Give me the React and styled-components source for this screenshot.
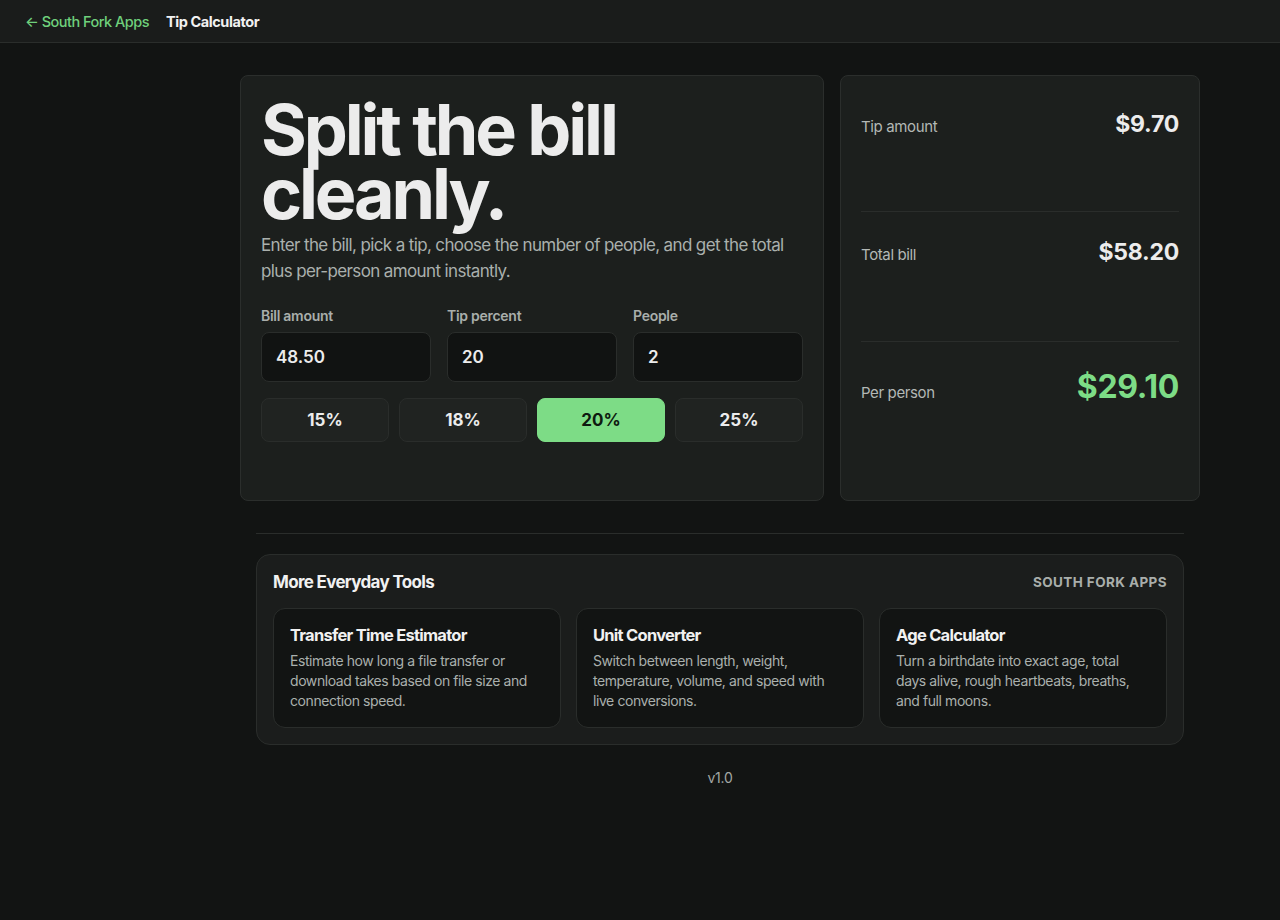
import React from "react";
import styled, { createGlobalStyle } from "styled-components";

const Global = createGlobalStyle`
  * { box-sizing: border-box; }
  html, body { margin: 0; padding: 0; background: #121413; }
  body {
    font-family: Inter, "Noto Sans", "Liberation Sans", sans-serif;
    color: #ececec;
    -webkit-font-smoothing: antialiased;
  }
`;

const Page = styled.div`
  min-height: 920px;
  background: #121413;
`;

const TopBar = styled.header`
  height: 43px;
  display: flex;
  align-items: center;
  gap: 17px;
  padding: 0 25px;
  background: #1a1c1b;
  border-bottom: 1px solid #2a2d2b;
`;

const BackLink = styled.a`
  color: #6fd07c;
  font-size: 14.5px;
  font-weight: 500;
  letter-spacing: -0.035em;
  text-decoration: none;
`;

const AppTitle = styled.span`
  color: #f1f1f1;
  font-size: 14.5px;
  font-weight: 700;
  letter-spacing: -0.03em;
`;

const Shell = styled.div`
  display: grid;
  grid-template-columns: 160px 1fr;
`;

const Main = styled.main`
  width: 960px;
  margin: 0 auto;
  padding-top: 32px;
`;

const TopGrid = styled.section`
  display: grid;
  grid-template-columns: 584px 360px;
  gap: 16px;
`;

const Card = styled.div`
  min-height: 426px;
  background: #1c1f1d;
  border: 1px solid #2b2e2c;
  border-radius: 8px;
  padding: 20px;
`;

const Heading = styled.h1`
  margin: 0;
  font-size: 70px;
  line-height: 64px;
  font-weight: 700;
  letter-spacing: -0.045em;
  color: #ececec;
  padding-top: 2px;
`;

const Lead = styled.p`
  margin: 6px 0 0;
  font-size: 17px;
  line-height: 26px;
  color: #aab0ad;
  letter-spacing: -0.037em;
`;

const FieldRow = styled.div`
  display: grid;
  grid-template-columns: repeat(3, 1fr);
  gap: 16px;
  margin-top: 24px;
`;

const Field = styled.label`
  display: flex;
  flex-direction: column;
  gap: 8px;
`;

const FieldLabel = styled.span`
  font-size: 14px;
  font-weight: 600;
  color: #a9aeab;
  letter-spacing: -0.02em;
  line-height: 16px;
`;

const Input = styled.input`
  height: 50px;
  width: 100%;
  background: #111312;
  border: 1px solid #2a2d2b;
  border-radius: 8px;
  padding: 0 14px;
  color: #ececec;
  font-family: inherit;
  font-size: 17px;
  font-weight: 600;
  outline: none;
`;

const Presets = styled.div`
  display: grid;
  grid-template-columns: repeat(4, 1fr);
  gap: 10px;
  margin-top: 16px;
`;

const Preset = styled.button`
  height: 44px;
  border-radius: 8px;
  border: 1px solid ${(p) => (p.$active ? "#7ddc86" : "#2a2d2b")};
  background: ${(p) => (p.$active ? "#7ddc86" : "#202321")};
  color: ${(p) => (p.$active ? "#0e1a10" : "#ececec")};
  font-family: inherit;
  font-size: 17px;
  font-weight: 700;
  cursor: pointer;
`;

const ResultCard = styled(Card)`
  display: grid;
  grid-template-rows: 116px 130px 1fr;
`;

const ResultRow = styled.div`
  display: flex;
  justify-content: space-between;
  align-items: baseline;
  padding-top: ${(p) => p.$pt}px;
  border-bottom: ${(p) => (p.$last ? "none" : "1px solid #2a2d2b")};
`;

const ResultLabel = styled.span`
  font-size: 15px;
  color: #b3b8b5;
  letter-spacing: -0.025em;
`;

const ResultValue = styled.span`
  font-size: ${(p) => (p.$big ? 32 : 23)}px;
  line-height: 1.2;
  font-weight: 700;
  color: ${(p) => (p.$big ? "#7ddc86" : "#ececec")};
  letter-spacing: -0.01em;
`;

const Divider = styled.hr`
  margin: 32px 16px 0;
  border: 0;
  border-top: 1px solid #2a2d2b;
`;

const ToolsPanel = styled.section`
  margin: 20px 16px 0;
  background: #1b1d1c;
  border: 1px solid #2a2d2b;
  border-radius: 14px;
  padding: 16px;
`;

const ToolsHeader = styled.div`
  display: flex;
  justify-content: space-between;
  align-items: center;
  height: 22px;
`;

const ToolsTitle = styled.h2`
  margin: 0;
  font-size: 17px;
  font-weight: 700;
  letter-spacing: -0.04em;
  color: #f1f1f1;
`;

const Brand = styled.span`
  font-size: 13.5px;
  font-weight: 700;
  letter-spacing: 0.03em;
  color: #a9aeab;
`;

const ToolGrid = styled.div`
  display: grid;
  grid-template-columns: repeat(3, 1fr);
  gap: 15px;
  margin-top: 15px;
`;

const ToolCard = styled.a`
  display: block;
  height: 120px;
  background: #121413;
  border: 1px solid #2a2d2b;
  border-radius: 12px;
  padding: 16px 16px;
  text-decoration: none;
`;

const ToolName = styled.h3`
  margin: 0;
  font-size: 16.5px;
  line-height: 20px;
  font-weight: 700;
  letter-spacing: -0.045em;
  color: #f1f1f1;
`;

const ToolDesc = styled.p`
  margin: 6px 0 0;
  font-size: 14px;
  line-height: 20px;
  color: #aab0ad;
  letter-spacing: -0.03em;
`;

const Version = styled.footer`
  text-align: center;
  margin-top: 24px;
  font-size: 14px;
  color: #a2a7a4;
  letter-spacing: -0.02em;
`;

const tools = [
  {
    name: "Transfer Time Estimator",
    desc: "Estimate how long a file transfer or download takes based on file size and connection speed.",
  },
  {
    name: "Unit Converter",
    desc: "Switch between length, weight, temperature, volume, and speed with live conversions.",
  },
  {
    name: "Age Calculator",
    desc: "Turn a birthdate into exact age, total days alive, rough heartbeats, breaths, and full moons.",
  },
];

export default function App() {
  const [bill, setBill] = React.useState("48.50");
  const [tip, setTip] = React.useState("20");
  const [people, setPeople] = React.useState("2");
  const b = parseFloat(bill) || 0;
  const t = parseFloat(tip) || 0;
  const n = Math.max(1, parseInt(people) || 1);
  const tipAmt = (b * t) / 100;
  const total = b + tipAmt;
  const per = total / n;

  return (
    <Page>
      <Global />
      <TopBar>
        <BackLink href="#">← South Fork Apps</BackLink>
        <AppTitle>Tip Calculator</AppTitle>
      </TopBar>
      <Shell>
        <div />
        <Main>
          <TopGrid>
            <Card>
              <Heading>
                Split the bill
                <br />
                cleanly.
              </Heading>
              <Lead>
                Enter the bill, pick a tip, choose the number of people, and get the total plus
                per-person amount instantly.
              </Lead>
              <FieldRow>
                <Field>
                  <FieldLabel>Bill amount</FieldLabel>
                  <Input value={bill} onChange={(e) => setBill(e.target.value)} />
                </Field>
                <Field>
                  <FieldLabel>Tip percent</FieldLabel>
                  <Input value={tip} onChange={(e) => setTip(e.target.value)} />
                </Field>
                <Field>
                  <FieldLabel>People</FieldLabel>
                  <Input value={people} onChange={(e) => setPeople(e.target.value)} />
                </Field>
              </FieldRow>
              <Presets>
                {["15", "18", "20", "25"].map((p) => (
                  <Preset key={p} $active={tip === p} onClick={() => setTip(p)}>
                    {p}%
                  </Preset>
                ))}
              </Presets>
            </Card>
            <ResultCard>
              <ResultRow $pt={15}>
                <ResultLabel>Tip amount</ResultLabel>
                <ResultValue>${tipAmt.toFixed(2)}</ResultValue>
              </ResultRow>
              <ResultRow $pt={27}>
                <ResultLabel>Total bill</ResultLabel>
                <ResultValue>${total.toFixed(2)}</ResultValue>
              </ResultRow>
              <ResultRow $pt={26} $last>
                <ResultLabel>Per person</ResultLabel>
                <ResultValue $big>${per.toFixed(2)}</ResultValue>
              </ResultRow>
            </ResultCard>
          </TopGrid>
          <Divider />
          <ToolsPanel>
            <ToolsHeader>
              <ToolsTitle>More Everyday Tools</ToolsTitle>
              <Brand>SOUTH FORK APPS</Brand>
            </ToolsHeader>
            <ToolGrid>
              {tools.map((t) => (
                <ToolCard key={t.name} href="#">
                  <ToolName>{t.name}</ToolName>
                  <ToolDesc>{t.desc}</ToolDesc>
                </ToolCard>
              ))}
            </ToolGrid>
          </ToolsPanel>
          <Version>v1.0</Version>
        </Main>
      </Shell>
    </Page>
  );
}
